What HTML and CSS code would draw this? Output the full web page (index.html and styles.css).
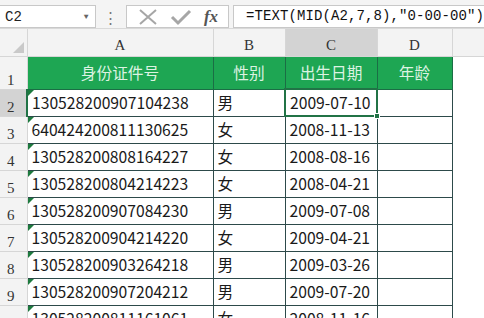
FILE: index.html
```html
<!DOCTYPE html>
<html lang="zh">
<head>
    <meta charset="UTF-8">
    <title>身份证提取出生日期</title>
    <link rel="stylesheet" href="styles.css">
</head>
<body>
    <div class="formula-bar">
        <div class="name-box">
            <span>C2</span>
            <span class="drop">&#9660;</span>
        </div>
        <div class="dots">&#8942;</div>
        <div class="buttons">
            <svg width="22" height="18" viewBox="0 0 22 18"><path d="M3 2 L19 16 M19 2 L3 16" stroke="#a6a6a6" stroke-width="2" fill="none"/></svg>
            <svg width="22" height="18" viewBox="0 0 22 18"><path d="M2 9 L8 15 L20 3" stroke="#a6a6a6" stroke-width="3" fill="none"/></svg>
            <span class="fx">fx</span>
        </div>
        <div class="formula">=TEXT(MID(A2,7,8),"0-00-00")</div>
    </div>

    <table class="sheet">
        <colgroup>
            <col class="c-row"><col class="c-a"><col class="c-b"><col class="c-c"><col class="c-d"><col class="c-rest">
        </colgroup>
        <tr class="col-head">
            <th class="corner"></th>
            <th>A</th><th>B</th><th class="sel">C</th><th>D</th><th class="blank"></th>
        </tr>
        <tr class="title">
            <th class="rn">1</th>
            <td>身份证件号</td><td>性别</td><td>出生日期</td><td>年龄</td><td class="blank"></td>
        </tr>
        <tr>
            <th class="rn sel">2</th>
            <td class="id">130528200907104238</td><td>男</td><td class="active">2009-07-10<span class="handle"></span></td><td></td><td class="blank"></td>
        </tr>
        <tr>
            <th class="rn">3</th>
            <td class="id">640424200811130625</td><td>女</td><td>2008-11-13</td><td></td><td class="blank"></td>
        </tr>
        <tr>
            <th class="rn">4</th>
            <td class="id">130528200808164227</td><td>女</td><td>2008-08-16</td><td></td><td class="blank"></td>
        </tr>
        <tr>
            <th class="rn">5</th>
            <td class="id">130528200804214223</td><td>女</td><td>2008-04-21</td><td></td><td class="blank"></td>
        </tr>
        <tr>
            <th class="rn">6</th>
            <td class="id">130528200907084230</td><td>男</td><td>2009-07-08</td><td></td><td class="blank"></td>
        </tr>
        <tr>
            <th class="rn">7</th>
            <td class="id">130528200904214220</td><td>女</td><td>2009-04-21</td><td></td><td class="blank"></td>
        </tr>
        <tr>
            <th class="rn">8</th>
            <td class="id">130528200903264218</td><td>男</td><td>2009-03-26</td><td></td><td class="blank"></td>
        </tr>
        <tr>
            <th class="rn">9</th>
            <td class="id">130528200907204212</td><td>男</td><td>2009-07-20</td><td></td><td class="blank"></td>
        </tr>
        <tr>
            <th class="rn">10</th>
            <td class="id">130528200811161061</td><td>女</td><td>2008-11-16</td><td></td><td class="blank"></td>
        </tr>
    </table>
</body>
</html>
```

FILE: styles.css
```css
* {
    margin: 0;
    padding: 0;
    box-sizing: border-box;
}

body {
    width: 484px;
    height: 318px;
    overflow: hidden;
    background: #ffffff;
    font-family: "Noto Sans CJK SC", "Noto Sans", sans-serif;
    color: #1a1a1a;
}

/* Formula bar */
.formula-bar {
    height: 29px;
    display: flex;
    align-items: flex-start;
    padding-top: 5px;
    background: #f4f4f4;
    border-bottom: 1px solid #d9d9d9;
}

.name-box {
    width: 100px;
    height: 23px;
    background: #fff;
    border: 1px solid #c8c8c8;
    border-left: none;
    display: flex;
    align-items: center;
    justify-content: space-between;
    padding: 0 6px 0 5px;
    font-family: "Liberation Mono", monospace;
    font-size: 14px;
    color: #222;
}

.name-box .drop {
    font-size: 8px;
    color: #666;
}

.dots {
    width: 32px;
    text-align: center;
    color: #777;
    font-size: 15px;
    line-height: 23px;
}

.buttons {
    width: 108px;
    height: 23px;
    background: #fff;
    border: 1px solid #c8c8c8;
    display: flex;
    align-items: center;
    justify-content: space-around;
    padding: 0 4px;
}

.fx {
    font-family: "Liberation Serif", serif;
    font-style: italic;
    font-weight: bold;
    font-size: 17px;
    color: #555;
}

.formula {
    flex: 1;
    height: 23px;
    margin-left: 4px;
    background: #fff;
    border: 1px solid #c8c8c8;
    border-right: none;
    padding-left: 12px;
    font-family: "Liberation Mono", monospace;
    font-size: 14px;
    letter-spacing: 0.1px;
    line-height: 21px;
    color: #111;
    white-space: nowrap;
}

/* Sheet grid */
.sheet {
    border-collapse: collapse;
    table-layout: fixed;
    width: 484px;
}

.c-row { width: 27px; }
.c-a { width: 186px; }
.c-b { width: 72px; }
.c-c { width: 92px; }
.c-d { width: 75px; }
.c-rest { width: 32px; }

.col-head th {
    height: 27px;
    background: #f3f3f3;
    border-right: 1px solid #d6d6d6;
    border-bottom: 1px solid #d6d6d6;
    font-family: "Liberation Serif", serif;
    font-weight: normal;
    font-size: 15px;
    color: #333;
    vertical-align: bottom;
    padding-bottom: 2px;
}

.col-head th.sel {
    background: #d3d3d3;
}

.col-head th.blank {
    border-right: none;
}

.corner {
    position: relative;
}

.corner::after {
    content: "";
    position: absolute;
    right: 3px;
    bottom: 3px;
    border-style: solid;
    border-width: 0 0 11px 11px;
    border-color: transparent transparent #c9c9c9 transparent;
}

th.rn {
    background: #f3f3f3;
    border-right: 1px solid #d6d6d6;
    border-bottom: 1px solid #d6d6d6;
    font-family: "Liberation Serif", serif;
    font-weight: normal;
    font-size: 15px;
    color: #333;
    vertical-align: bottom;
    text-align: left;
    padding: 0 0 0 7px;
}

th.rn.sel {
    background: #d3d3d3;
    border-right: 2px solid #217346;
}

tr td {
    height: 27px;
    border: 1px solid #2d4a4a;
    font-size: 15.7px;
    padding: 0 4px;
    white-space: nowrap;
    overflow: hidden;
}

tr td.blank {
    border: none;
    border-left: 1px solid #2d4a4a;
}

.title td {
    height: 33px;
    background: #1ea653;
    color: #dcf3e2;
    text-align: center;
    border-color: #1b6e45;
}

.title td.blank {
    background: #fff;
}

.title th.rn {
    height: 33px;
}

td.id {
    position: relative;
}

td.id::before {
    content: "";
    position: absolute;
    left: 0;
    top: 0;
    border-style: solid;
    border-width: 6px 6px 0 0;
    border-color: #1d7a3e transparent transparent transparent;
}

td.active {
    position: relative;
    border: 2px solid #217346;
    overflow: visible;
}

.handle {
    position: absolute;
    right: -4px;
    bottom: -4px;
    width: 6px;
    height: 6px;
    background: #217346;
    border: 1px solid #fff;
}
```
